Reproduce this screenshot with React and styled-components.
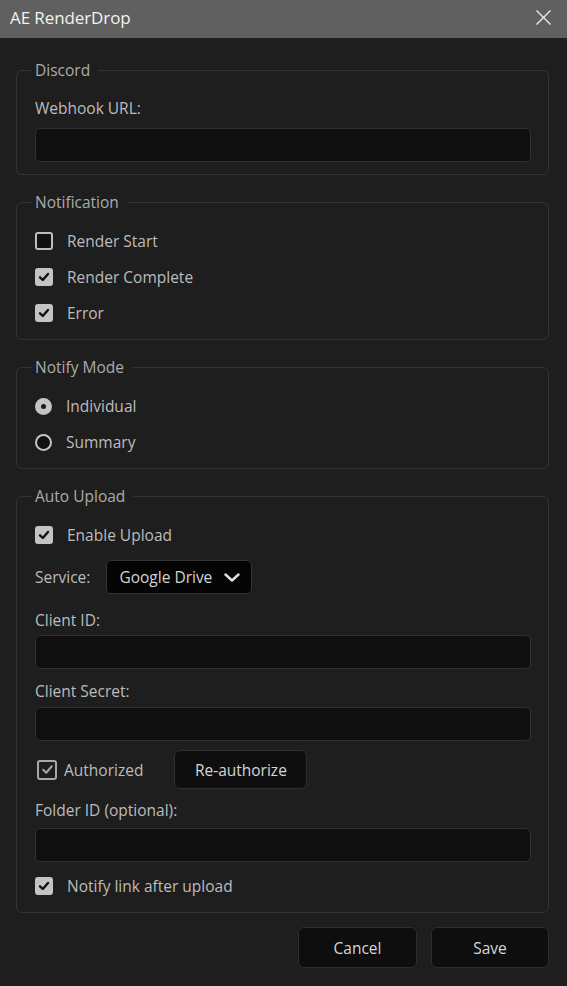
import React from 'react';
import styled, { createGlobalStyle } from 'styled-components';

const GlobalStyle = createGlobalStyle`
  html, body {
    margin: 0;
    padding: 0;
    background: #1e1e1e;
  }
  body {
    font-family: "Open Sans", "Noto Sans", sans-serif;
    color: #bdbdbd;
  }
  * { box-sizing: border-box; }
`;

const Window = styled.div`
  width: 567px;
  min-height: 986px;
  display: flex;
  flex-direction: column;
  background: #1e1e1e;
`;

const TitleBar = styled.div`
  height: 38px;
  background: #606060;
  display: flex;
  align-items: center;
  justify-content: space-between;
  padding: 0 16px 3px 10px;
`;

const Title = styled.span`
  color: #f2f2f2;
  font-size: 17px;
  letter-spacing: -0.1px;
`;

const CloseButton = styled.button`
  background: none;
  border: none;
  padding: 0;
  width: 15px;
  height: 15px;
  display: flex;
  cursor: pointer;
`;

const Body = styled.div`
  display: flex;
  flex-direction: column;
  gap: 16px;
  padding: 21px 18px 0 16px;
`;

const Group = styled.fieldset`
  margin: 0;
  border: 1px solid #343434;
  border-radius: 6px;
  padding: ${({ tight }) => (tight ? '17px 17px 12px 18px' : '18px 17px 16px 18px')};
  display: flex;
  flex-direction: column;
  gap: ${({ gap }) => (gap != null ? `${gap}px` : '0')};
  min-width: 0;
`;

const Legend = styled.legend`
  font-size: 15.5px;
  line-height: 22px;
  color: #ababab;
  padding: 0 8px 0 3px;
  margin-left: -3px;
`;

const Label = styled.div`
  font-size: 15.5px;
  line-height: 20px;
  color: #bcbcbc;
  margin-top: ${({ mt }) => mt || 0}px;
  margin-bottom: ${({ mb }) => (mb != null ? mb : 6)}px;
`;

const TextInput = styled.input`
  display: block;
  width: 100%;
  height: 34px;
  background: #0f0f0f;
  border: 1px solid #303030;
  border-radius: 5px;
  color: #ddd;
  font-family: inherit;
  font-size: 15px;
  padding: 0 10px;
  outline: none;
`;

const CheckRow = styled.label`
  display: flex;
  align-items: center;
  gap: 14px;
  height: 20px;
  font-size: 15.5px;
  color: #bcbcbc;
  margin-top: ${({ mt }) => mt || 0}px;
  cursor: pointer;
`;

const Box = styled.span`
  width: 18px;
  height: 18px;
  border-radius: 3px;
  flex-shrink: 0;
  display: flex;
  align-items: center;
  justify-content: center;
  background: ${({ checked }) => (checked ? '#c4c4c4' : '#111')};
  border: 2px solid ${({ checked }) => (checked ? '#c4c4c4' : '#bdbdbd')};
`;

const Radio = styled.span`
  width: 17px;
  height: 17px;
  border-radius: 50%;
  flex-shrink: 0;
  display: flex;
  align-items: center;
  justify-content: center;
  background: ${({ checked }) => (checked ? '#c4c4c4' : '#111')};
  border: 2px solid #c4c4c4;

  &::after {
    content: '';
    width: 5px;
    height: 5px;
    border-radius: 50%;
    background: ${({ checked }) => (checked ? '#1a1a1a' : 'transparent')};
  }
`;

const ServiceRow = styled.div`
  display: flex;
  align-items: center;
  gap: 16px;
  margin-top: 15px;
  font-size: 15.5px;
  color: #bcbcbc;
`;

const Select = styled.button`
  height: 34px;
  width: 146px;
  background: #050505;
  border: 1px solid #333;
  border-radius: 5px;
  color: #d4d4d4;
  font-family: inherit;
  font-size: 15.5px;
  display: flex;
  align-items: center;
  justify-content: space-between;
  padding: 0 11px 0 12px;
  cursor: pointer;
`;

const AuthRow = styled.div`
  display: flex;
  align-items: center;
  gap: 31px;
  margin-top: 9px;
`;

const AuthCheck = styled.label`
  display: flex;
  align-items: center;
  gap: 7px;
  font-size: 15.5px;
  color: #bcbcbc;
  padding-left: 2px;
`;

const OutlineBox = styled.span`
  width: 20px;
  height: 20px;
  border: 2px solid #a8a8a8;
  border-radius: 3px;
  display: flex;
  align-items: center;
  justify-content: center;
`;

const Button = styled.button`
  height: ${({ h }) => h || 41}px;
  width: ${({ w }) => w}px;
  background: #0e0e0e;
  border: 1px solid #2e2e2e;
  border-radius: 6px;
  color: #d6d6d6;
  font-family: inherit;
  font-size: 15.5px;
  cursor: pointer;
`;

const Footer = styled.div`
  display: flex;
  justify-content: flex-end;
  gap: 14px;
  margin-top: -2px;
`;

const Tick = ({ color = '#111', size = 12, width = 2.4 }) => (
  <svg width={size} height={size} viewBox="0 0 12 12" fill="none">
    <path d="M2 6.3 L4.8 9 L10 3" stroke={color} strokeWidth={width} strokeLinecap="round" strokeLinejoin="round" />
  </svg>
);

const Check = ({ checked, children, mt }) => (
  <CheckRow mt={mt}>
    <Box checked={checked}>{checked && <Tick />}</Box>
    {children}
  </CheckRow>
);

const Option = ({ checked, children, mt }) => (
  <CheckRow mt={mt}>
    <Radio checked={checked} />
    {children}
  </CheckRow>
);

export default function App() {
  return (
    <Window>
      <GlobalStyle />
      <TitleBar>
        <Title>AE RenderDrop</Title>
        <CloseButton aria-label="Close">
          <svg width="15" height="15" viewBox="0 0 15 15">
            <path d="M0.5 0.5 L14.5 14.5 M14.5 0.5 L0.5 14.5" stroke="#ececec" strokeWidth="1.4" />
          </svg>
        </CloseButton>
      </TitleBar>

      <Body>
        <Group tight>
          <Legend>Discord</Legend>
          <Label mb={10}>Webhook URL:</Label>
          <TextInput />
        </Group>

        <Group gap={16}>
          <Legend>Notification</Legend>
          <Check>Render Start</Check>
          <Check checked>Render Complete</Check>
          <Check checked>Error</Check>
        </Group>

        <Group gap={16}>
          <Legend>Notify Mode</Legend>
          <Option checked>Individual</Option>
          <Option>Summary</Option>
        </Group>

        <Group>
          <Legend>Auto Upload</Legend>
          <Check checked>Enable Upload</Check>
          <ServiceRow>
            Service:
            <Select>
              Google Drive
              <svg width="16" height="9" viewBox="0 0 16 9" fill="none">
                <path d="M1.5 1.5 L8 7.5 L14.5 1.5" stroke="#e0e0e0" strokeWidth="2.4" strokeLinecap="round" strokeLinejoin="round" />
              </svg>
            </Select>
          </ServiceRow>
          <Label mt={16} mb={5}>Client ID:</Label>
          <TextInput />
          <Label mt={12}>Client Secret:</Label>
          <TextInput />
          <AuthRow>
            <AuthCheck>
              <OutlineBox>
                <Tick color="#a8a8a8" size={13} width={1.8} />
              </OutlineBox>
              Authorized
            </AuthCheck>
            <Button w={133} h={39}>Re-authorize</Button>
          </AuthRow>
          <Label mt={11} mb={8}>Folder ID (optional):</Label>
          <TextInput />
          <Check checked mt={14}>Notify link after upload</Check>
        </Group>

        <Footer>
          <Button w={119}>Cancel</Button>
          <Button w={118}>Save</Button>
        </Footer>
      </Body>
    </Window>
  );
}
